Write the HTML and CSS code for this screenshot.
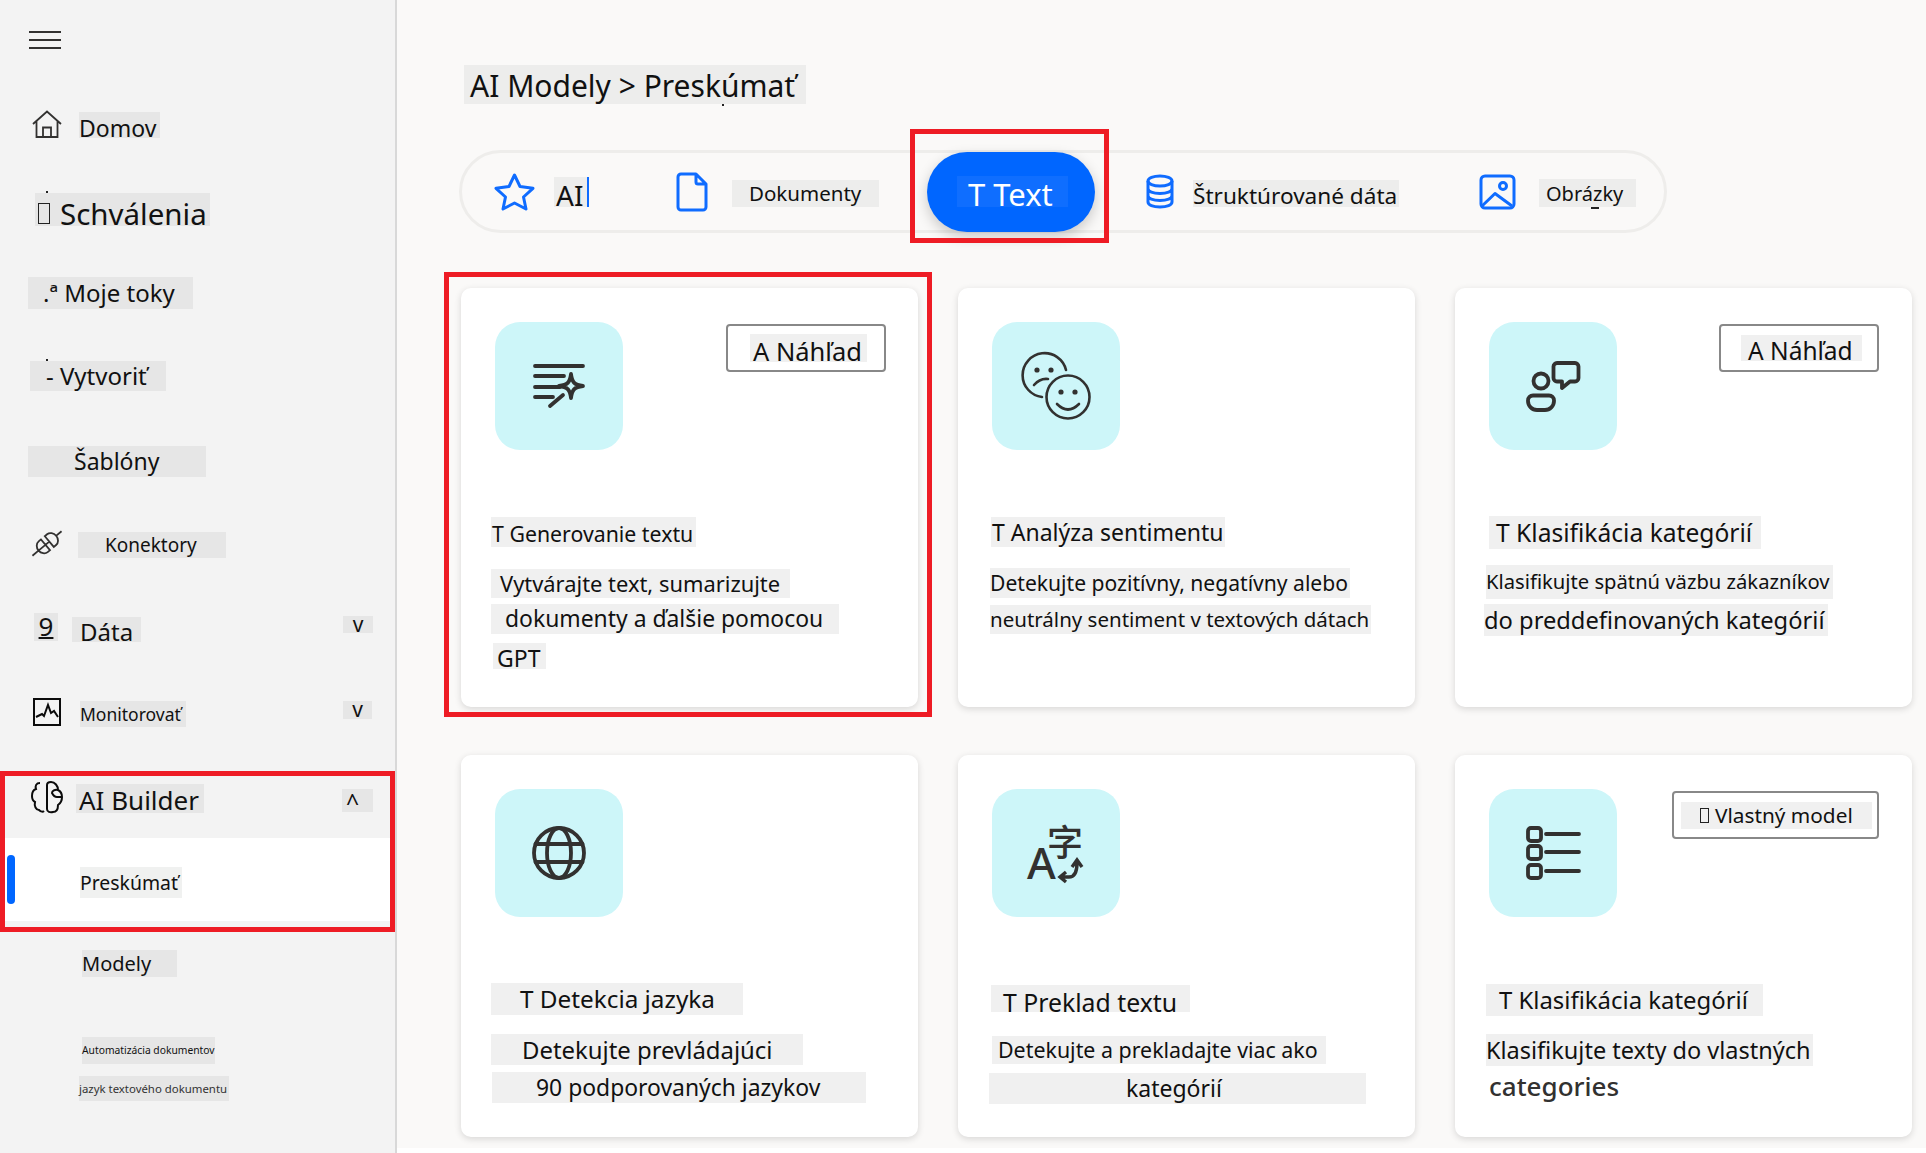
FILE: index.html
```html
<!DOCTYPE html>
<html lang="sk">
<head>
<meta charset="utf-8">
<title>AI Modely - Preskúmať</title>
<link rel="stylesheet" href="styles.css">
</head>
<body>
<div class="app">
  <aside class="sidebar">
    <div class="burger"><span></span><span></span><span></span></div>

    <div class="row r-domov">
      <svg class="i-dark" width="30" height="28" viewBox="0 0 30 28"><path d="M1 14 15 1.500 29 14M4.500 11V27H25.500V11M11 27V17.500H19V27"/></svg>
      <span class="chip side c-domov">Domov</span>
    </div>
    <div class="row r-schval">
      <span class="chip side c-schval mark"><i class="tofu t-big"></i>Schválenia</span>
    </div>
    <div class="row r-moje"><span class="chip side c-moje">.ª Moje toky</span></div>
    <div class="row r-vytv"><span class="chip side c-vytv mark">- Vytvoriť</span></div>
    <div class="row r-sabl"><span class="chip side c-sabl">Šablóny</span></div>
    <div class="row r-konek">
      <svg class="i-dark" width="32" height="31" viewBox="0 0 32 31"><g transform="rotate(-40 16 15.500)"><path d="M-3 15.500H6M14 8.500H11A6 7 0 0 0 11 22.500H14ZM3 15.500H19M19 8.500H22A6 7 0 0 1 22 22.500H19ZM27 15.500H35"/></g></svg>
      <span class="chip side c-konek">Konektory</span>
    </div>
    <div class="row r-data">
      <span class="chip side c-nine">9</span>
      <span class="chip side c-data">Dáta</span>
      <span class="chip side c-chev1">v</span>
    </div>
    <div class="row r-monit">
      <svg class="i-black" width="28" height="28" viewBox="0 0 28 28"><path d="M1 1H27V27H1Z"/><path d="M3 19 9 16 11 18 15 7 18 15 21 13 25 19"/></svg>
      <span class="chip side c-monit">Monitorovať</span>
      <span class="chip side c-chev2">v</span>
    </div>
    <div class="row r-ai">
      <svg class="i-black" width="32" height="32" viewBox="0 0 32 32"><path d="M9 2C5 2 4 5 5 8 2 9 1 12 1 15 1 18 2 20 4 21 3 25 5 29 8 29 10 31 12 31 13 30"/><path d="M16 4V28C16 31 19 31.500 22 31 26 31 27 27 27 24 30 22 31 18 31 16 31 12 29 10 27 9 27 5 24 1 20 1 18 1 16 2 16 4ZM27 9C24 8 21 10 21 12 22 14 24 16 26 16H31"/></svg>
      <span class="chip side c-ai">AI Builder</span>
      <span class="chip side c-chev3">^</span>
    </div>
    <div class="active-row">
      <span class="indicator"></span>
      <span class="chip c-presk">Preskúmať</span>
    </div>
    <span class="chip side c-modely">Modely</span>
    <span class="chip side c-autom">Automatizácia dokumentov</span>
    <span class="chip side c-jazyk">jazyk textového dokumentu</span>
  </aside>

  <main class="main">
    <h1 class="chip head c-title mark">AI Modely &gt; Preskúmať</h1>

    <nav class="tabs">
      <svg class="i-blue i-star" width="41" height="38" viewBox="0 0 41 38"><path d="M20.500 2 26 13.500 39 15.300 29.500 24 32 36 20.500 30 9 36 11.500 24 2 15.300 15 13.500Z"/></svg>
      <span class="chip head c-tab-ai">AI</span>
      <svg class="i-blue i-doc" width="32" height="40" viewBox="0 0 32 40"><path d="M5 2H20L30 12V35A3 3 0 0 1 27 38H5A3 3 0 0 1 2 35V5A3 3 0 0 1 5 2ZM20 2V10A2 2 0 0 0 22 12H30"/></svg>
      <span class="chip head c-tab-dok">Dokumenty</span>
      <div class="tab-active"><span class="chip c-tab-text">T Text</span></div>
      <svg class="i-blue i-db" width="28" height="35" viewBox="0 0 28 35"><ellipse cx="14" cy="7" rx="12" ry="5"/><path d="M2 7V28C2 31 7 33 14 33S26 31 26 28V7M2 14.500C2 17.500 7 19.500 14 19.500S26 17.500 26 14.500M2 21.500C2 24.500 7 26.500 14 26.500S26 24.500 26 21.500"/></svg>
      <span class="chip head c-tab-str">Štruktúrované dáta</span>
      <svg class="i-blue i-img" width="37" height="36" viewBox="0 0 37 36"><rect x="2" y="2" width="33" height="32" rx="4"/><circle cx="24" cy="12" r="3.500"/><path d="M3 32 16 19.500 33 32"/></svg>
      <span class="chip head c-tab-obr mark">Obrázky</span>
    </nav>

    <section class="grid">
      <article class="card">
        <div class="card-top">
          <div class="icon-box">
            <svg class="i-card i-heavy" width="52" height="44" viewBox="0 0 52 44"><path d="M2 2H50M2 12H31M2 23H27M2 33H20M17 42 30 31"/><path class="thin" d="M38 10C39 18 41 21 50 22 41 23 39 26 38 34 37 26 35 23 26 22 35 21 37 18 38 10Z"/></svg>
          </div>
          <div class="badge"><span class="chip card-chip c-bad1">A Náhľad</span></div>
        </div>
        <h2 class="chip card-chip c1-t">T Generovanie textu</h2>
        <p class="chip card-chip c1-a">Vytvárajte text, sumarizujte</p>
        <p class="chip card-chip c1-b">dokumenty a ďalšie pomocou</p>
        <p class="chip card-chip c1-c">GPT</p>
      </article>

      <article class="card">
        <div class="card-top">
          <div class="icon-box">
            <svg class="i-face" width="70" height="68" viewBox="0 0 70 68"><path d="M45 18A22 22 0 1 0 21 45M13 33Q19 26 27 27"/><circle cx="47" cy="45" r="21.500"/><path d="M36 52Q47 63 58 52"/><circle class="dot" cx="16" cy="18" r="2.600"/><circle class="dot" cx="30" cy="18" r="2.600"/><circle class="dot" cx="40" cy="40" r="2.600"/><circle class="dot" cx="54" cy="40" r="2.600"/></svg>
          </div>
        </div>
        <h2 class="chip card-chip c2-t">T Analýza sentimentu</h2>
        <p class="chip card-chip c2-a">Detekujte pozitívny, negatívny alebo</p>
        <p class="chip card-chip c2-b">neutrálny sentiment v textových dátach</p>
      </article>

      <article class="card">
        <div class="card-top card-top-r">
          <div class="icon-box">
            <svg class="i-card i-heavy" width="54" height="51" viewBox="0 0 54 51"><circle cx="15" cy="20" r="7.500"/><path d="M7 34.500H23A5 5 0 0 1 28 39.500V40A9 9 0 0 1 19 49H11A9 9 0 0 1 2 40V39.500A5 5 0 0 1 7 34.500Z"/><path d="M31 2H49A3.500 3.500 0 0 1 52.500 5.500V17A3.500 3.500 0 0 1 49 20.500H44L36 27V20.500H31A3.500 3.500 0 0 1 27.500 17V5.500A3.500 3.500 0 0 1 31 2Z"/></svg>
          </div>
          <div class="badge"><span class="chip card-chip c-bad2">A Náhľad</span></div>
        </div>
        <h2 class="chip card-chip c3-t">T Klasifikácia kategórií</h2>
        <p class="chip card-chip c3-a">Klasifikujte spätnú väzbu zákazníkov</p>
        <p class="chip card-chip c3-b">do preddefinovaných kategórií</p>
      </article>

      <article class="card">
        <div class="card-top">
          <div class="icon-box">
            <svg class="i-card i-heavy" width="54" height="54" viewBox="0 0 54 54"><circle cx="27" cy="27" r="25"/><ellipse cx="27" cy="27" rx="12" ry="25"/><path d="M3.500 18H50.500M3.500 36H50.500"/></svg>
          </div>
        </div>
        <h2 class="chip card-chip c4-t">T Detekcia jazyka</h2>
        <p class="chip card-chip c4-a">Detekujte prevládajúci</p>
        <p class="chip card-chip c4-b">90 podporovaných jazykov</p>
      </article>

      <article class="card">
        <div class="card-top">
          <div class="icon-box">
            <svg class="i-trans" width="58" height="60" viewBox="0 0 58 60"><text class="t-a" x="0" y="56">A</text><text class="t-zi" x="20" y="33">字</text><path d="M34 54H42C48 54 50 49 50 40M45 44 50 37 55 44M39 49 33 54 39 59"/></svg>
          </div>
        </div>
        <h2 class="chip card-chip c5-t">T Preklad textu</h2>
        <p class="chip card-chip c5-a">Detekujte a prekladajte viac ako</p>
        <p class="chip card-chip c5-b">kategórií</p>
      </article>

      <article class="card">
        <div class="card-top card-top-r">
          <div class="icon-box">
            <svg class="i-card i-heavy" width="54" height="54" viewBox="0 0 54 54"><rect x="2" y="2" width="13" height="13" rx="3"/><rect x="2" y="20" width="13" height="13" rx="3"/><rect x="2" y="39" width="13" height="13" rx="3"/><path d="M20 8H53M20 26H53M20 45H53"/></svg>
          </div>
          <div class="badge badge-wide"><span class="chip card-chip c-bad3"><i class="tofu t-small"></i>Vlastný model</span></div>
        </div>
        <h2 class="chip card-chip c6-t">T Klasifikácia kategórií</h2>
        <p class="chip card-chip c6-a">Klasifikujte texty do vlastných</p>
        <p class="chip c6-b">categories</p>
      </article>
    </section>
  </main>

  <div class="red red-side"></div>
  <div class="red red-tab"></div>
  <div class="red red-card"></div>
</div>
</body>
</html>
```

FILE: styles.css
```css
* { box-sizing: border-box; }
html, body { margin: 0; padding: 0; background: #fff; }
body {
  width: 1926px;
  height: 1153px;
  overflow: hidden;
  font-family: "Noto Sans", "Open Sans", sans-serif;
  color: #111;
}
.app { position: relative; display: flex; align-items: flex-start; width: 1926px; height: 1153px; }

/* text chips */
.chip {
  display: block;
  margin: 0;
  font-weight: 400;
  white-space: nowrap;
  position: relative;
  flex: none;
}
.side { background: #e6e6e6; }
.head { background: #ededec; }
.card-chip { background: #f0f0f0; }
.mark::after {
  content: "";
  position: absolute;
  width: 2px;
  height: 2px;
  background: #222;
}
.tofu {
  display: inline-block;
  flex: none;
  border: 1.500px solid #222;
}
.t-big { width: 12px; height: 21px; margin-right: 10px; }
.t-small { width: 9px; height: 15px; margin-right: 6px; }

/* sidebar */
.sidebar {
  width: 397px;
  height: 1153px;
  flex: none;
  background: #f3f3f3;
  border-right: 2px solid #d8d8d8;
  display: flex;
  flex-direction: column;
  align-items: flex-start;
}
.burger { display: flex; flex-direction: column; gap: 6px; margin: 31px 0 0 29px; }
.burger span { display: block; width: 32px; height: 2px; background: #323130; }
.row { display: flex; align-items: flex-start; width: 395px; flex: none; }

.r-domov { margin-top: 61px; height: 28px; padding-left: 32px; }
.c-domov { margin: 2px 0 0 17px; width: 81px; height: 26px; line-height: 32px; padding-left: 0; font-size: 23px; overflow: visible; }
.r-schval { margin-top: 55px; height: 33px; padding-left: 35px; }
.c-schval { display: flex; align-items: center; width: 175px; height: 33px; padding: 7px 0 0 3px; font-size: 29.500px; }
.c-schval::after { left: 11px; top: -2px; }
.r-moje { margin-top: 51px; height: 32px; padding-left: 28px; }
.c-moje { width: 165px; height: 32px; line-height: 32px; padding-left: 15px; font-size: 24px; }
.r-vytv { margin-top: 52px; height: 30px; padding-left: 30px; }
.c-vytv { width: 136px; height: 30px; line-height: 30px; padding-left: 16px; font-size: 24px; }
.c-vytv::after { left: 16px; top: -2px; }
.r-sabl { margin-top: 55px; height: 31px; padding-left: 28px; }
.c-sabl { width: 178px; height: 31px; line-height: 31px; padding-left: 46px; font-size: 23px; }
.r-konek { margin-top: 51px; height: 31px; padding-left: 31px; }
.c-konek { margin: 4px 0 0 15px; width: 148px; height: 26px; line-height: 26px; padding-left: 27px; font-size: 19px; }
.r-data { margin-top: 54px; height: 29px; padding: 0 22px 0 34px; }
.c-nine { width: 24px; height: 28px; line-height: 27px; text-align: center; font-size: 26px; text-decoration: underline; text-decoration-thickness: 1.500px; }
.c-data { margin: 4px 0 0 14px; width: 69px; height: 25px; line-height: 29px; padding-left: 8px; font-size: 24px; }
.c-chev1 { margin: 3px 0 0 auto; width: 30px; height: 17px; line-height: 17px; text-align: center; font-size: 21px; }
.r-monit { margin-top: 56px; height: 29px; padding: 0 23px 0 33px; }
.c-monit { margin: 3px 0 0 19px; width: 106px; height: 26px; line-height: 26px; padding-left: 0; font-size: 17.500px; }
.c-chev2 { margin: 3px 0 0 auto; width: 29px; height: 18px; line-height: 17px; text-align: center; font-size: 21px; }
.r-ai { margin-top: 54px; height: 32px; padding: 0 22px 0 31px; }
.c-ai { margin: 3px 0 0 13px; width: 128px; height: 29px; line-height: 32px; padding-left: 3px; font-size: 26px; }
.c-chev3 { margin: 8px 0 0 auto; width: 31px; height: 23px; line-height: 26px; padding-left: 4px; font-size: 23px; }
.active-row {
  display: flex;
  align-items: center;
  flex: none;
  width: 385px;
  height: 83px;
  margin: 25px 0 0 5px;
  background: #fff;
}
.indicator { display: block; flex: none; width: 8px; height: 49px; margin-left: 2px; border-radius: 4px; background: #0066ff; }
.c-presk { margin: 6px 0 0 65px; width: 102px; height: 31px; line-height: 31px; padding-left: 0; font-size: 19.400px; background: #f0f1f0; }
.c-modely { margin: 29px 0 0 82px; width: 95px; height: 27px; line-height: 27px; padding-left: 0; font-size: 20px; }
.c-autom { margin: 60px 0 0 82px; width: 133px; height: 27px; line-height: 27px; font-size: 10.300px; }
.c-jazyk { margin: 12px 0 0 79px; width: 150px; height: 25px; line-height: 25px; font-size: 11.400px; color: #333; }

/* main */
.main {
  width: 1529px;
  height: 1148px;
  flex: none;
  background: #faf9f8;
  overflow: hidden;
}
.c-title { margin: 65px 0 0 67px; width: 342px; height: 39px; line-height: 41px; padding-left: 6px; font-size: 30px; }
.c-title::after { left: 258px; top: 39px; }

.tabs {
  display: flex;
  align-items: center;
  width: 1208px;
  height: 83px;
  margin: 46px 0 0 62px;
  border: 3px solid #eeedeb;
  border-radius: 42px;
}
.i-star { margin-left: 32px; flex: none; }
.c-tab-ai { margin-left: 19px; width: 35px; height: 30px; line-height: 36px; padding-left: 2px; font-size: 28px; border-right: 2px solid #0f6cff; }
.i-doc { margin-left: 87px; flex: none; }
.c-tab-dok { margin: 3px 0 0 24px; width: 147px; height: 27px; line-height: 27px; padding-left: 17px; font-size: 20.500px; }
.tab-active {
  display: flex;
  align-items: center;
  flex: none;
  width: 168px;
  height: 80px;
  margin-left: 48px;
  padding-left: 30px;
  border-radius: 40px;
  background: #0066ff;
  box-shadow: 0 5px 14px rgba(0, 0, 0, .2);
}
.c-tab-text { width: 111px; height: 31px; line-height: 37px; padding-left: 11px; font-size: 31px; color: #fff; background: #0f6eff; }
.i-db { margin-left: 51px; flex: none; }
.c-tab-str { margin: 3px 0 0 19px; width: 206px; height: 27px; line-height: 31px; font-size: 22.600px; }
.i-img { margin-left: 80px; flex: none; }
.c-tab-obr { margin: 3px 0 0 23px; width: 97px; height: 28px; line-height: 30px; padding-left: 7px; font-size: 20px; }
.c-tab-obr::after { left: 52px; top: 28px; width: 8px; }

/* cards */
.grid {
  display: grid;
  grid-template-columns: repeat(3, 457px);
  grid-template-rows: 419px 382px;
  gap: 48px 40px;
  margin: 55px 0 0 64px;
}
.card {
  background: #fff;
  border-radius: 10px;
  box-shadow: 0 2px 7px rgba(0, 0, 0, .14);
}
.card-top {
  display: flex;
  align-items: flex-start;
  justify-content: space-between;
  padding: 34px 32px 0 34px;
}
.card-top-r { padding-right: 33px; }
.icon-box {
  display: flex;
  align-items: center;
  justify-content: center;
  flex: none;
  width: 128px;
  height: 128px;
  border-radius: 25px;
  background: #cdf6f9;
}
.badge {
  display: flex;
  align-items: center;
  flex: none;
  width: 160px;
  height: 48px;
  margin-top: 2px;
  border: 2px solid #888;
  border-radius: 4px;
}
.badge-wide { width: 207px; }
.c-bad1 { margin-left: 22px; width: 117px; height: 28px; line-height: 35px; padding-left: 3px; font-size: 25.500px; }
.c-bad2 { margin-left: 20px; width: 121px; height: 26px; line-height: 32px; padding-left: 7px; font-size: 24.500px; }
.c-bad3 { display: flex; align-items: center; margin-left: 7px; width: 191px; height: 27px; padding-left: 19px; font-size: 20.800px; }

.c1-t { margin: 67px 0 0 30px; width: 205px; height: 30px; line-height: 34px; padding-left: 1px; font-size: 21.300px; }
.c1-a { margin: 22px 0 0 30px; width: 299px; height: 29px; line-height: 29px; padding-left: 9px; font-size: 21.900px; }
.c1-b { margin: 6px 0 0 30px; width: 348px; height: 30px; line-height: 30px; padding-left: 14px; font-size: 22.900px; }
.c1-c { margin: 9px 0 0 32px; width: 53px; height: 26px; line-height: 30px; padding-left: 4px; font-size: 23px; }

.c2-t { margin: 67px 0 0 33px; width: 234px; height: 30px; line-height: 30px; padding-left: 1px; font-size: 23px; }
.c2-a { margin: 21px 0 0 32px; width: 360px; height: 30px; line-height: 30px; font-size: 21.100px; }
.c2-b { margin: 7px 0 0 32px; width: 381px; height: 29px; line-height: 29px; font-size: 20.500px; }

.c3-t { margin: 66px 0 0 34px; width: 272px; height: 33px; line-height: 33px; padding-left: 7px; font-size: 24.600px; }
.c3-a { margin: 16px 0 0 31px; width: 347px; height: 34px; line-height: 33px; padding-left: 0; font-size: 20.200px; }
.c3-b { margin: 5px 0 0 29px; width: 344px; height: 32px; line-height: 32px; font-size: 23.700px; }

.c4-t { margin: 66px 0 0 30px; width: 252px; height: 32px; line-height: 32px; padding-left: 29px; font-size: 24.300px; }
.c4-a { margin: 19px 0 0 30px; width: 312px; height: 31px; line-height: 32px; padding-left: 31px; font-size: 23.900px; }
.c4-b { margin: 7px 0 0 31px; width: 374px; height: 31px; line-height: 31px; padding-left: 44px; font-size: 22.900px; }

.c5-t { margin: 68px 0 0 33px; width: 199px; height: 27px; line-height: 34px; padding-left: 12px; font-size: 24.800px; }
.c5-a { margin: 24px 0 0 34px; width: 334px; height: 28px; line-height: 28px; padding-left: 6px; font-size: 21.400px; }
.c5-b { margin: 9px 0 0 31px; width: 377px; height: 31px; line-height: 31px; padding-left: 137px; font-size: 23px; }

.c6-t { margin: 67px 0 0 31px; width: 277px; height: 32px; line-height: 32px; padding-left: 13px; font-size: 23.900px; }
.c6-a { margin: 18px 0 0 31px; width: 327px; height: 32px; line-height: 32px; padding-left: 0; font-size: 23.500px; }
.c6-b { margin: 4px 0 0 34px; height: 32px; line-height: 32px; font-size: 26px; font-weight: 500; color: #323130; }

/* icons */
svg { overflow: visible; flex: none; }
.i-dark path { fill: none; stroke: #323130; stroke-width: 1.800; }
.i-black path { fill: none; stroke: #0b0b0b; stroke-width: 2; }
.i-blue path, .i-blue ellipse, .i-blue rect, .i-blue circle {
  fill: none;
  stroke: #0f6cff;
  stroke-width: 3;
  stroke-linejoin: round;
}
.i-card path, .i-card rect, .i-card circle, .i-card ellipse {
  fill: none;
  stroke: #323130;
  stroke-width: 3.200;
  stroke-linecap: round;
  stroke-linejoin: round;
}
.i-heavy path, .i-heavy rect, .i-heavy circle, .i-heavy ellipse { stroke-width: 3.800; }
.i-face path, .i-face circle { fill: none; stroke: #323130; stroke-width: 2.600; stroke-linecap: round; }
.i-face .dot { fill: #323130; stroke: none; }
.i-trans text { fill: #323130; font-weight: 500; }
.i-trans path { fill: none; stroke: #323130; stroke-width: 3.400; }
.t-a { font-family: "Noto Sans", sans-serif; font-size: 44px; }
.t-zi { font-family: "Noto Sans CJK SC", sans-serif; font-size: 36px; }

/* annotation boxes */
.red { position: absolute; border: 5px solid #ee1c25; pointer-events: none; }
.red-side { left: 0; top: 771px; width: 395px; height: 161px; }
.red-tab { left: 910px; top: 129px; width: 199px; height: 114px; }
.red-card { left: 444px; top: 272px; width: 488px; height: 445px; }
```
